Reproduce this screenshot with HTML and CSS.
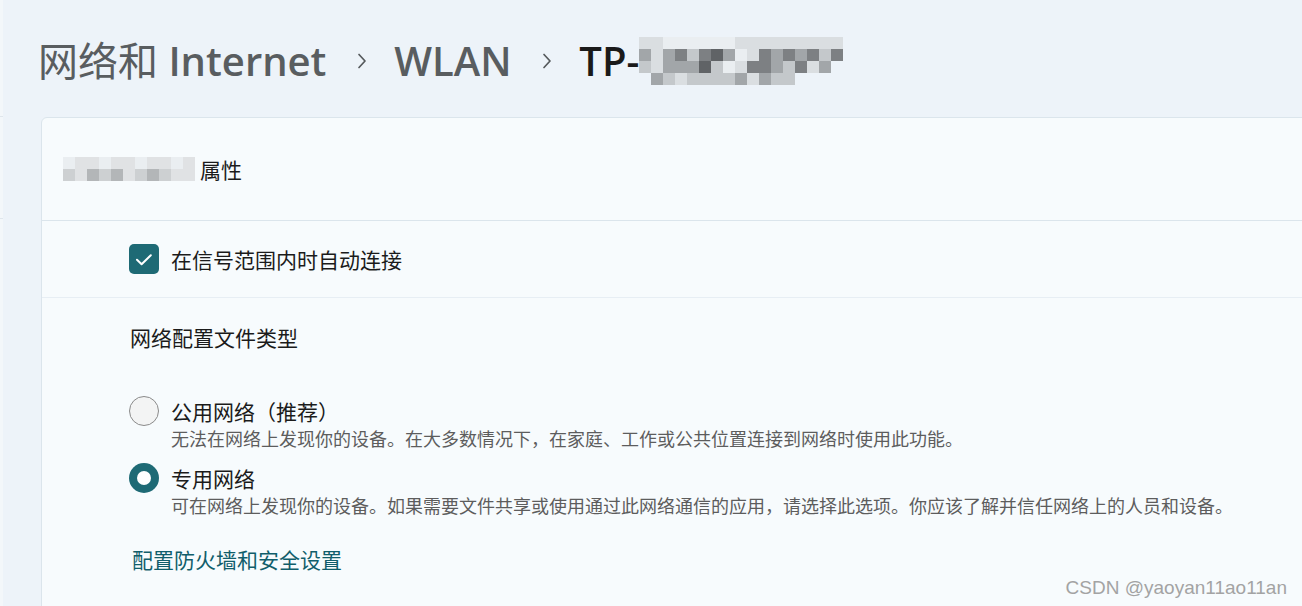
FILE: index.html
```html
<!DOCTYPE html>
<html lang="zh-CN">
<head>
    <meta charset="UTF-8">
    <title>网络和 Internet - WLAN</title>
    <link rel="stylesheet" href="styles.css">
</head>
<body>

<div class="shell">
    <div class="rail">
        <span class="rail-line first"></span>
        <span class="rail-line"></span>
    </div>

    <main class="main">
        <h1 class="crumbs">
            <span class="crumb"><span class="cjk">网络和</span> Internet</span>
            <svg class="chev" width="10" height="16" viewBox="0 0 10 16"><polyline points="2,1.5 8,8 2,14.5"/></svg>
            <span class="crumb">WLAN</span>
            <svg class="chev" width="10" height="16" viewBox="0 0 10 16"><polyline points="2,1.5 8,8 2,14.5"/></svg>
            <span class="crumb current">TP-</span><span class="mosaic big">
                <i class="a"></i><i class="a"></i><i class="w"></i><i class="w"></i><i class="w"></i><i class="w"></i><i class="w"></i><i class="w"></i><i class="a"></i><i class="a"></i><i class="a"></i><i class="a"></i><i class="a"></i><i class="a"></i><i class="a"></i><i class="a"></i><i class="a"></i>
                <i class="c"></i><i class="a"></i><i class="c"></i><i class="d"></i><i class="b"></i><i class="d"></i><i class="e"></i><i class="c"></i><i class="w"></i><i class="a"></i><i class="d"></i><i class="c"></i><i class="d"></i><i class="c"></i><i class="d"></i><i class="b"></i><i class="d"></i>
                <i class="b"></i><i class="a"></i><i class="c"></i><i class="c"></i><i class="c"></i><i class="e"></i><i class="b"></i><i class="w"></i><i class="a"></i><i class="d"></i><i class="d"></i><i class="c"></i><i class="b"></i><i class="d"></i><i class="a"></i><i class="c"></i><i class="o"></i>
                <i class="o"></i><i class="c"></i><i class="b"></i><i class="a"></i><i class="b"></i><i class="b"></i><i class="b"></i><i class="b"></i><i class="c"></i><i class="a"></i><i class="c"></i><i class="b"></i><i class="b"></i><i class="o"></i><i class="o"></i><i class="o"></i><i class="o"></i>
            </span>
        </h1>

        <section class="card">
            <div class="card-head">
                <span class="mosaic small">
                    <i class="w"></i><i class="a"></i><i class="a"></i><i class="w"></i><i class="a"></i><i class="a"></i><i class="w"></i><i class="a"></i><i class="a"></i><i class="w"></i><i class="a"></i>
                    <i class="b"></i><i class="a"></i><i class="c"></i><i class="b"></i><i class="c"></i><i class="a"></i><i class="b"></i><i class="c"></i><i class="b"></i><i class="a"></i><i class="a"></i>
                </span>
                <span>属性</span>
            </div>

            <div class="check-row">
                <span class="checkbox">
                    <svg width="30" height="30" viewBox="0 0 30 30"><polyline points="8,15.8 12.6,20.3 21.8,11.2"/></svg>
                </span>
                <span>在信号范围内时自动连接</span>
            </div>

            <div class="profile">
                <div class="profile-label">网络配置文件类型</div>

                <div class="option first">
                    <span class="radio"></span>
                    <div class="option-text">
                        <div class="option-title">公用网络（推荐）</div>
                        <div class="option-desc">无法在网络上发现你的设备。在大多数情况下，在家庭、工作或公共位置连接到网络时使用此功能。</div>
                    </div>
                </div>

                <div class="option">
                    <span class="radio on"></span>
                    <div class="option-text">
                        <div class="option-title">专用网络</div>
                        <div class="option-desc">可在网络上发现你的设备。如果需要文件共享或使用通过此网络通信的应用，请选择此选项。你应该了解并信任网络上的人员和设备。</div>
                    </div>
                </div>

                <a class="link" href="#">配置防火墙和安全设置</a>
            </div>
        </section>
    </main>
</div>

<div class="watermark">CSDN @yaoyan11ao11an</div>

</body>
</html>
```

FILE: styles.css
```css
html, body, div, span, h1, a, section, main {
    margin: 0;
    padding: 0;
}
body {
    height: 606px;
    overflow: hidden;
    background-color: #edf3f9;
    font-family: "Noto Sans CJK SC", sans-serif;
    color: #1b1b1b;
    position: relative;
}
.shell {
    display: flex;
    min-height: 606px;
}
.rail {
    width: 3px;
    background-color: #f3f7fa;
}
.rail-line {
    display: block;
    height: 1px;
    margin-top: 101px;
    background-color: #dfe6ec;
}
.rail-line.first {
    margin-top: 116px;
}
.main {
    flex: 1;
    min-width: 0;
    padding-left: 35px;
}

/* breadcrumb title */
.crumbs {
    padding-top: 33px;
    height: 54px;
    font: 600 40px/56px "Open Sans", "Noto Sans CJK SC", sans-serif;
    color: #595d60;
    white-space: nowrap;
}
.crumbs .cjk {
    font-weight: 400;
}
.crumb.current {
    color: #1a1a1a;
}
.chev {
    vertical-align: 7px;
    margin: 0 17px 0 20px;
    fill: none;
    stroke: #55595c;
    stroke-width: 1.7;
    stroke-linecap: round;
    stroke-linejoin: round;
}

/* pixelated blur over the network name */
.mosaic {
    display: inline-grid;
    grid-auto-rows: 12px;
}
.mosaic.big {
    grid-template-columns: repeat(17, 12px);
    vertical-align: top;
    margin-top: 4px;
}
.mosaic.small {
    grid-template-columns: repeat(11, 12px);
    margin-right: 5px;
}
.mosaic i { display: block; }
.mosaic .o { background-color: transparent; }
.mosaic .w { background-color: #eaeef1; }
.mosaic .a { background-color: #dadee1; }
.mosaic .b { background-color: #c4c8cb; }
.mosaic .c { background-color: #a2a6a9; }
.mosaic .d { background-color: #7d8083; }
.mosaic .e { background-color: #606366; }
.card-head .mosaic .a { background-color: #e0e2e4; }
.card-head .mosaic .b { background-color: #cdd0d2; }
.card-head .mosaic .c { background-color: #b3b6b8; }

/* card */
.card {
    margin: 30px -20px 0 3px;
    background-color: #f7fbfd;
    border: 1px solid #dbe5ec;
    border-radius: 6px;
    font-size: 21px;
    line-height: 30px;
}
.card-head {
    height: 102px;
    padding-left: 21px;
    display: flex;
    align-items: center;
}
.check-row {
    height: 76px;
    padding-left: 87px;
    border-top: 1px solid #dbe5ec;
    display: flex;
    align-items: center;
    gap: 12px;
}
.checkbox {
    width: 30px;
    height: 30px;
    border-radius: 5px;
    background-color: #1e6a75;
}
.checkbox svg {
    display: block;
    fill: none;
    stroke: #ffffff;
    stroke-width: 2;
    stroke-linecap: round;
    stroke-linejoin: round;
}
.profile {
    border-top: 1px solid #e7eef4;
    padding: 24px 0 40px 88px;
}
.option {
    display: flex;
    align-items: flex-start;
    gap: 12px;
    margin: 13px 0 0 -1px;
}
.option.first {
    margin-top: 44px;
}
.radio {
    flex: none;
    box-sizing: border-box;
    width: 30px;
    height: 30px;
    border-radius: 50%;
    border: 1.5px solid #8a8a8a;
    background-color: #f3f4f4;
    position: relative;
}
.radio.on {
    border: none;
    background-color: #1e6a75;
}
.radio.on::after {
    content: "";
    position: absolute;
    left: 8px;
    top: 8px;
    width: 14px;
    height: 14px;
    border-radius: 50%;
    background-color: #ffffff;
}
.option-desc {
    font-size: 18px;
    line-height: 24px;
    color: #5d5d5d;
}
.link {
    display: inline-block;
    margin: 27px 0 0 2px;
    color: #115e6b;
    text-decoration: none;
}

.watermark {
    position: absolute;
    right: 15px;
    bottom: 7px;
    font: 19px/22px "Liberation Sans", sans-serif;
    color: #a3a3a3;
}
```
